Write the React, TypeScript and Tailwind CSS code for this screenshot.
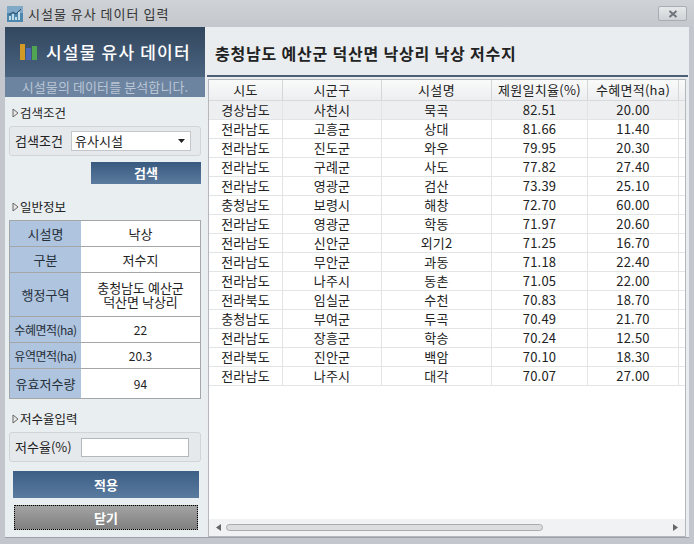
const font = { fontFamily: '"Noto Sans CJK KR", "Liberation Sans", sans-serif' };

const rows = [
  ["경상남도", "사천시", "묵곡", "82.51", "20.00"],
  ["전라남도", "고흥군", "상대", "81.66", "11.40"],
  ["전라남도", "진도군", "와우", "79.95", "20.30"],
  ["전라남도", "구례군", "사도", "77.82", "27.40"],
  ["전라남도", "영광군", "검산", "73.39", "25.10"],
  ["충청남도", "보령시", "해창", "72.70", "60.00"],
  ["전라남도", "영광군", "학동", "71.97", "20.60"],
  ["전라남도", "신안군", "외기2", "71.25", "16.70"],
  ["전라남도", "무안군", "과동", "71.18", "22.40"],
  ["전라남도", "나주시", "동촌", "71.05", "22.00"],
  ["전라북도", "임실군", "수천", "70.83", "18.70"],
  ["충청남도", "부여군", "두곡", "70.49", "21.70"],
  ["전라남도", "장흥군", "학송", "70.24", "12.50"],
  ["전라북도", "진안군", "백암", "70.10", "18.30"],
  ["전라남도", "나주시", "대각", "70.07", "27.00"],
];

const headers = ["시도", "시군구", "시설명", "제원일치율(%)", "수혜면적(ha)"];
const widths = ["w-[74px]", "w-[99px]", "w-[110px]", "w-[96px]", "w-[91px]"];

function SectionLabel({ text, className }: { text: string; className: string }) {
  return (
    <div className={`flex items-center gap-[1px] pl-[7px] text-[12.5px] leading-[16px] text-[#222] ${className}`}>
      <svg width="7" height="10" viewBox="0 0 7 10">
        <path d="M1 1 L6 5 L1 9 Z" fill="#e8e8e8" stroke="#666" strokeWidth="1" />
      </svg>
      <span>{text}</span>
    </div>
  );
}

function InfoRow({ label, h, small, children }: { label: string; h: string; small?: boolean; children: React.ReactNode }) {
  return (
    <div className={`flex border-b border-[#a4a6a8] last:border-b-0 ${h}`}>
      <div className={`flex w-[71px] shrink-0 items-center justify-center bg-[#afc4de] text-[#26303a] ${small ? "text-[12px] tracking-[-0.5px]" : "text-[13px]"}`}>
        {label}
      </div>
      <div className="flex flex-1 items-center justify-center bg-white text-center text-[12px] leading-[14px] text-[#222]">
        {children}
      </div>
    </div>
  );
}

export default function App() {
  return (
    <div style={font} className="flex h-[544px] w-[694px] flex-col overflow-hidden bg-[#c3c6cc] px-[5px] pb-[6px]">
      <div className="-mx-[5px] flex h-[27px] shrink-0 items-center bg-gradient-to-b from-[#cfd2d6] to-[#c4c7cc] pl-[7px] pr-[7px]">
        <svg width="16" height="16" viewBox="0 0 16 16" className="shrink-0">
          <rect width="16" height="16" fill="#4d87ad" />
          <rect x="0" y="0" width="16" height="7" fill="#7fa9c6" />
          <path d="M3 14 V10 M6 14 V8 M9 14 V11 M12 14 V6" stroke="#c3dcea" strokeWidth="2" />
          <path d="M2 9 L6 6 L9 8 L14 3" stroke="#2a4a6c" strokeWidth="1" fill="none" />
        </svg>
        <span className="ml-[5px] text-[13px] tracking-[1px] text-[#333]">시설물 유사 데이터 입력</span>
        <div className="ml-auto flex h-[15px] w-[29px] items-center justify-center rounded-[2px] border border-[#a9acb1] bg-gradient-to-b from-[#e6e8ea] to-[#cfd2d6]">
          <svg width="10" height="8" viewBox="0 0 10 8">
            <path d="M1.5 1 L8.5 7 M8.5 1 L1.5 7" stroke="#6f747a" strokeWidth="2" />
          </svg>
        </div>
      </div>

      <div className="flex min-h-0 flex-1 border-b border-[#9ea2a8] bg-[#e9edf0]">
        <div className="flex w-[200px] shrink-0 flex-col bg-[#e9eef1]">
          <div className="flex h-[50px] shrink-0 items-center bg-gradient-to-b from-[#32475f] to-[#4a637f] pl-[15px]">
            <div className="flex items-end gap-[1px]">
              <span className="h-[16px] w-[5px] bg-[#d49a28]" />
              <span className="h-[12px] w-[5px] bg-[#4c68b4]" />
              <span className="h-[14px] w-[5px] bg-[#4fa552]" />
            </div>
            <span className="ml-[9px] text-[17px] font-medium tracking-[1.2px] text-white">시설물 유사 데이터</span>
          </div>
          <div className="flex h-[20px] shrink-0 items-center justify-center bg-[#6d84a0] text-[13px] tracking-[0.1px] text-[#b9c6d6]">
            시설물의 데이터를 분석합니다.
          </div>

          <SectionLabel text="검색조건" className="mt-[8px]" />
          <div className="mx-[4px] mt-[5px] flex h-[30px] items-center rounded-[3px] border border-[#d2d5d8] bg-[#e6e9ec] pl-[5px]">
            <span className="w-[56px] text-[13px] text-[#222]">검색조건</span>
            <div className="flex h-[20px] w-[120px] items-center justify-between border border-[#c4c7cb] bg-white pl-[3px] pr-[5px] text-[13px] text-[#222]">
              <span>유사시설</span>
              <svg width="7" height="4" viewBox="0 0 7 4"><path d="M0 0 H7 L3.5 4 Z" fill="#222" /></svg>
            </div>
          </div>
          <div className="mr-[4px] mt-[6px] flex h-[22px] w-[110px] items-center justify-center self-end bg-gradient-to-b from-[#395a7f] to-[#5b7a9e] text-[13px] font-bold text-white">
            검색
          </div>

          <SectionLabel text="일반정보" className="mt-[15px]" />
          <div className="mx-[4px] mt-[5px] flex flex-col border border-[#a4a6a8]">
            <InfoRow label="시설명" h="h-[26px]"><span className="text-[13px]">낙상</span></InfoRow>
            <InfoRow label="구분" h="h-[26px]"><span className="text-[13px]">저수지</span></InfoRow>
            <InfoRow label="행정구역" h="h-[44px]">
              <span className="text-[13px]">충청남도 예산군<br />덕산면 낙상리</span>
            </InfoRow>
            <InfoRow label="수혜면적(ha)" h="h-[26px]" small>22</InfoRow>
            <InfoRow label="유역면적(ha)" h="h-[26px]" small>20.3</InfoRow>
            <InfoRow label="유효저수량" h="h-[29px]">94</InfoRow>
          </div>

          <SectionLabel text="저수율입력" className="mt-[12px]" />
          <div className="mx-[4px] mt-[5px] flex h-[30px] items-center rounded-[3px] border border-[#d2d5d8] bg-[#e6e9ec] pl-[5px]">
            <span className="w-[66px] text-[13px] text-[#222]">저수율(%)</span>
            <div className="h-[19px] w-[108px] border border-[#b4b7bb] bg-white" />
          </div>
          <div className="ml-[8px] mr-[6px] mt-[9px] flex h-[27px] items-center justify-center bg-gradient-to-b from-[#3d5f86] to-[#5a7a9f] text-[13px] font-bold text-white">
            적용
          </div>
          <div className="ml-[9px] mr-[7px] mt-[7px] flex h-[25px] items-center justify-center border border-dotted border-black bg-gradient-to-b from-[#a3a3a3] to-[#808080] text-[13px] font-bold text-white">
            닫기
          </div>
        </div>

        <div className="flex min-w-0 flex-1 flex-col">
          <div className="flex h-[48px] shrink-0 items-center pl-[10px] pt-[4px] text-[16px] font-bold tracking-[0.8px] text-[#222]">
            충청남도 예산군 덕산면 낙상리 낙상 저수지
          </div>
          <div className="ml-[2px] mr-[1px] h-[2px] shrink-0 bg-[#4c5f75]" />
          <div className="ml-[3px] mr-[3px] mt-[2px] flex min-h-0 flex-1 flex-col border border-[#b4b7bb] bg-white">
            <div className="flex-1 overflow-hidden">
              <div className="flex h-[21px] border-b border-[#d8dadd] bg-gradient-to-b from-[#fafafa] to-[#eceef0] text-[13px] tracking-[0.3px] text-[#222]">
                {headers.map((h, i) => (
                  <div key={h} className={`flex shrink-0 items-center justify-center border-r border-[#d4d6d9] ${widths[i]}`}>{h}</div>
                ))}
              </div>
              {rows.map((r, idx) => (
                <div key={idx} className={`flex h-[19px] border-b border-[#e2e4e6] text-[13px] tracking-[0.2px] text-[#222] ${idx === 0 ? "bg-[#eeeff1]" : "bg-white"}`}>
                  {r.map((c, i) => (
                    <div key={i} className={`flex shrink-0 items-center justify-center border-r border-[#e2e4e6] ${widths[i]}`}>{c}</div>
                  ))}
                </div>
              ))}
            </div>
            <div className="flex h-[17px] shrink-0 items-center bg-[#f1f2f3] pl-[7px] pr-[6px]">
              <svg width="5" height="7" viewBox="0 0 5 7"><path d="M5 0 V7 L0 3.5 Z" fill="#666" /></svg>
              <div className="ml-[5px] h-[7px] w-[317px] rounded-full border border-[#a9abb0] bg-[#dcdddf]" />
              <svg width="5" height="7" viewBox="0 0 5 7" className="ml-auto mr-[1px]"><path d="M0 0 V7 L5 3.5 Z" fill="#666" /></svg>
            </div>
          </div>
        </div>
      </div>
    </div>
  );
}
